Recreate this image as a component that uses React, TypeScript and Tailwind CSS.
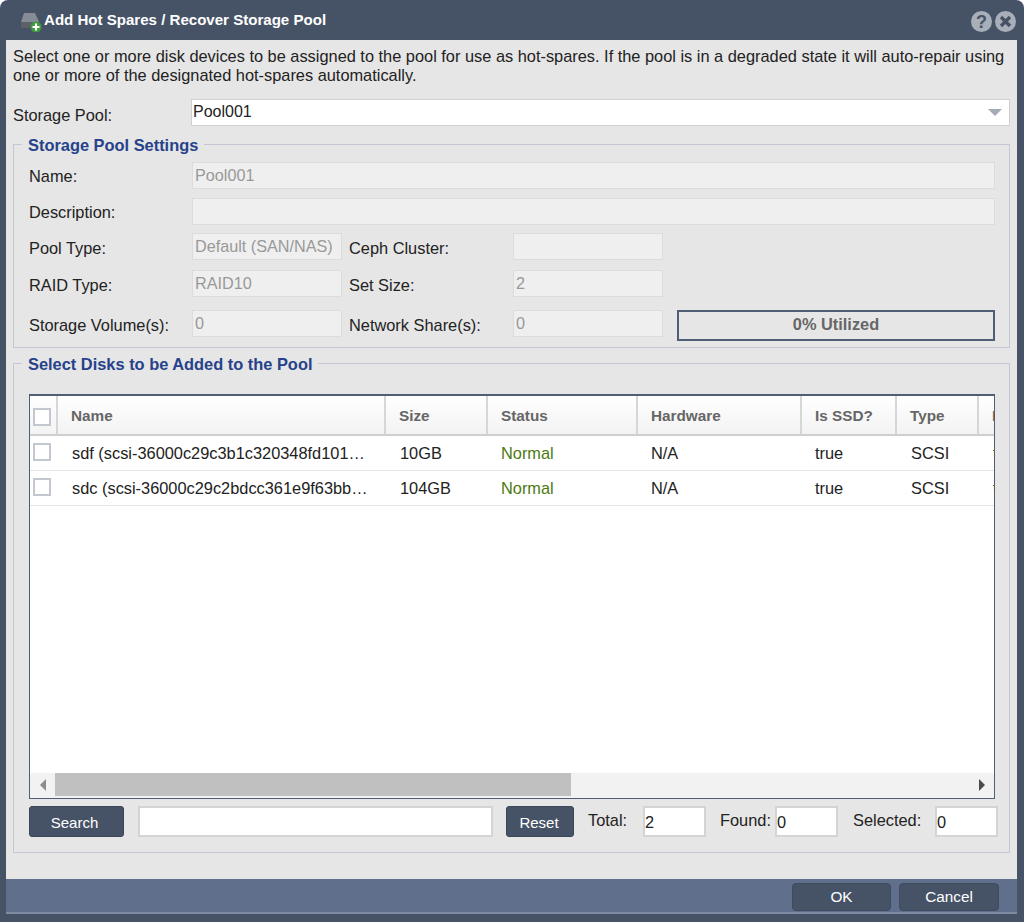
import type { ReactNode } from 'react';

const columns = 'grid grid-cols-[28px_328px_102px_150px_164px_95px_82px_100px]';

const disks = [
  { name: 'sdf (scsi-36000c29c3b1c320348fd101…', size: '10GB' },
  { name: 'sdc (scsi-36000c29c2bdcc361e9f63bb…', size: '104GB' },
];

function Label({ children, className = '' }: { children: ReactNode; className?: string }) {
  return <span className={'text-[16.38px] leading-[20px] text-[#222] ' + className}>{children}</span>;
}

function ReadOnlyInput({ value = '', className = '' }: { value?: string; className?: string }) {
  return (
    <div className={'h-[27px] bg-[#efefef] border border-[#dcdcdc] pl-[2px] text-[16.2px] leading-[24px] text-[#999] ' + className}>
      {value}
    </div>
  );
}

function CountBox({ value, className = '' }: { value: string; className?: string }) {
  return (
    <div className={'h-[31px] w-[63px] bg-white border-2 border-[#d4d4d4] text-[16.38px] leading-[28px] text-[#222] ' + className}>
      {value}
    </div>
  );
}

function Legend({ children }: { children: ReactNode }) {
  return (
    <legend className="ml-[8px] px-[6px] text-[16.4px] leading-[20px] font-bold text-[#26428b]">
      <span className="relative top-[1px]">{children}</span>
    </legend>
  );
}

function HeadCell({ children }: { children?: ReactNode }) {
  return (
    <div className="border-r-2 border-[#d6d6d6] pl-[13px] text-[15.3px] leading-[39px] font-bold text-[#666] whitespace-nowrap overflow-hidden">
      {children}
    </div>
  );
}

function Cell({ children, className = '' }: { children?: ReactNode; className?: string }) {
  return <div className={'text-[16.38px] leading-[35px] whitespace-nowrap overflow-hidden ' + className}>{children}</div>;
}

function Check() {
  return <div className="w-[18px] h-[18px] bg-white border-2 border-[#c3c8d0]" />;
}

export default function App() {
  return (
    <div className="w-[1024px] h-[922px] flex flex-col bg-[#465367] rounded-t-lg overflow-hidden font-['Liberation_Sans',Arial,sans-serif]">
      <div className="h-10 flex items-center pl-[20px] pr-[8px] shrink-0">
        <svg width="23" height="20" viewBox="0 0 23 20" className="mt-[4px]">
          <path d="M4 1h11l4 9v6H1v-6z" fill="#858c97" />
          <path d="M1 10h18v6H1z" fill="#5c6068" />
          <circle cx="16" cy="15" r="5.5" fill="#3e9a3c" />
          <path d="M16 11.5v7M12.5 15h7" stroke="#fff" strokeWidth="2.2" />
        </svg>
        <span className="ml-[1px] text-[15.07px] font-bold text-white">Add Hot Spares / Recover Storage Pool</span>
        <div className="ml-auto flex gap-[3px] mt-[3px]">
          <span className="w-[21px] h-[21px] rounded-full bg-[#a9afb8] flex items-center justify-center text-[18px] leading-none font-bold text-[#465367]">?</span>
          <span className="w-[21px] h-[21px] rounded-full bg-[#a9afb8] flex items-center justify-center">
            <svg width="13" height="13" viewBox="0 0 13 13">
              <path d="M2 2l9 9M11 2l-9 9" stroke="#465367" strokeWidth="3.4" />
            </svg>
          </span>
        </div>
      </div>

      <div className="ml-[6px] mr-[7px] h-[839px] shrink-0 bg-[#e6e6e6] pt-[7px] px-[7px]">
        <p className="text-[16.38px] leading-[19px] text-[#222]">
          Select one or more disk devices to be assigned to the pool for use as hot-spares. If the pool is in a degraded state it will auto-repair using one or more of the designated hot-spares automatically.
        </p>

        <div className="mt-[14px] flex items-center">
          <Label className="w-[178px] mt-[5px]">Storage Pool:</Label>
          <div className="h-[27px] flex-1 bg-white border border-[#d0d0d0] pl-[1px] flex items-center justify-between text-[16px] text-[#222]">
            <span className="-mt-[1px]">Pool001</span>
            <span className="w-0 h-0 mr-[7px] border-x-[7px] border-x-transparent border-t-[7px] border-t-[#a4abb5]" />
          </div>
        </div>

        <fieldset className="mt-[8px] border border-[#c3c7d6] px-0 pb-0 rounded-none">
          <Legend>Storage Pool Settings</Legend>
          <div className="pl-[15px] pr-[14px] pt-[8px] pb-[10px]">
            <div className="flex items-center">
              <Label className="w-[163px] mt-[1px]">Name:</Label>
              <ReadOnlyInput value="Pool001" className="flex-1" />
            </div>
            <div className="flex items-center mt-[9px]">
              <Label className="w-[163px] mt-[1px]">Description:</Label>
              <ReadOnlyInput className="flex-1" />
            </div>
            <div className="flex items-center mt-[8px]">
              <Label className="w-[163px] mt-[2px]">Pool Type:</Label>
              <ReadOnlyInput value="Default (SAN/NAS)" className="w-[150px]" />
              <Label className="w-[171px] pl-[7px] mt-[2px]">Ceph Cluster:</Label>
              <ReadOnlyInput className="w-[150px]" />
            </div>
            <div className="flex items-center mt-[10px]">
              <Label className="w-[163px] mt-[2px]">RAID Type:</Label>
              <ReadOnlyInput value="RAID10" className="w-[150px]" />
              <Label className="w-[171px] pl-[7px] mt-[2px]">Set Size:</Label>
              <ReadOnlyInput value="2" className="w-[150px]" />
            </div>
            <div className="flex items-center mt-[13px]">
              <Label className="w-[163px] mt-[2px]">Storage Volume(s):</Label>
              <ReadOnlyInput value="0" className="w-[150px]" />
              <Label className="w-[171px] pl-[7px] mt-[2px]">Network Share(s):</Label>
              <ReadOnlyInput value="0" className="w-[150px]" />
              <div className="ml-[14px] flex-1 h-[31px] -mb-[4px] border-2 border-[#4f5d75] text-center text-[16.38px] leading-[25px] font-bold text-[#666]">
                0% Utilized
              </div>
            </div>
          </div>
        </fieldset>

        <fieldset className="mt-[5px] border border-[#c3c7d6] px-0 pb-0 rounded-none">
          <Legend>Select Disks to be Added to the Pool</Legend>
          <div className="pl-[15px] pr-[10px] pt-[21px] pb-[15px]">
            <div className="w-[966px] h-[405px] flex flex-col bg-white border border-t-2 border-[#4f5d75] overflow-hidden">
              <div className={columns + ' w-[1049px] h-[40px] shrink-0 border-b-2 border-[#cfcfcf] bg-gradient-to-b from-white to-[#f3f3f3]'}>
                <div className="border-r-2 border-[#d6d6d6] flex items-center pl-[3px] pt-[3px]"><Check /></div>
                <HeadCell>Name</HeadCell>
                <HeadCell>Size</HeadCell>
                <HeadCell>Status</HeadCell>
                <HeadCell>Hardware</HeadCell>
                <HeadCell>Is SSD?</HeadCell>
                <HeadCell>Type</HeadCell>
                <HeadCell>Pool</HeadCell>
              </div>
              {disks.map((disk) => (
                <div key={disk.name} className={columns + ' w-[1049px] h-[35px] shrink-0 border-b border-[#e6e6e6] text-[#222]'}>
                  <div className="flex pt-[7px] pl-[3px]"><Check /></div>
                  <Cell className="pl-[14px]">{disk.name}</Cell>
                  <Cell className="pl-[14px]">{disk.size}</Cell>
                  <Cell className="pl-[13px] text-[#4c7a12]">Normal</Cell>
                  <Cell className="pl-[13px]">N/A</Cell>
                  <Cell className="pl-[13px]">true</Cell>
                  <Cell className="pl-[14px]">SCSI</Cell>
                  <Cell className="pl-[14px]">true</Cell>
                </div>
              ))}
              <div className="flex-1" />
              <div className="h-[25px] shrink-0 flex items-center bg-[#f2f2f2] pb-[2px]">
                <span className="w-[25px] flex justify-center">
                  <span className="w-0 h-0 border-y-[6px] border-y-transparent border-r-[6px] border-r-[#8c8c8c]" />
                </span>
                <div className="w-[516px] h-full bg-[#c0c0c0]" />
                <span className="ml-auto mr-[9px] w-0 h-0 border-y-[6px] border-y-transparent border-l-[6px] border-l-[#4a4a4a]" />
              </div>
            </div>

            <div className="mt-[7px] flex items-center w-[970px]">
              <button className="w-[95px] h-[31px] pt-[3px] pr-[4px] rounded-[3px] bg-[#465367] border border-[#3a4557] text-[15px] text-white">Search</button>
              <div className="ml-[14px] w-[355px] h-[31px] bg-white border-2 border-[#d4d4d4]" />
              <button className="ml-[13px] w-[68px] h-[31px] pt-[3px] pr-[2px] rounded-[3px] bg-[#465367] border border-[#3a4557] text-[15px] text-white">Reset</button>
              <Label className="ml-[14px] w-[55px] -mt-[4px]">Total:</Label>
              <CountBox value="2" />
              <Label className="ml-[14px] w-[55px] -mt-[4px]">Found:</Label>
              <CountBox value="0" />
              <Label className="ml-[15px] w-[82px] -mt-[4px]">Selected:</Label>
              <CountBox value="0" />
            </div>
          </div>
        </fieldset>
      </div>

      <div className="ml-[6px] mr-[7px] h-[35px] shrink-0 bg-[#5f6f8c] border-b-2 border-[#7d8aa1] flex items-start justify-end gap-[8px] pr-[18px] pt-[4px]">
        <button className="w-[99px] h-[28px] pt-[1px] rounded-[4px] bg-[#465367] border border-[#3f4b5e] text-[15.3px] text-white">OK</button>
        <button className="w-[100px] h-[28px] pt-[1px] rounded-[4px] bg-[#465367] border border-[#3f4b5e] text-[15.3px] text-white">Cancel</button>
      </div>
    </div>
  );
}
